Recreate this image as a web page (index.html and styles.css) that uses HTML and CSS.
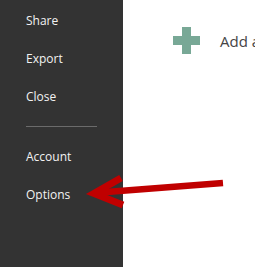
FILE: index.html
```html
<!DOCTYPE html>
<html>
<head>
<meta charset="utf-8">
<link rel="stylesheet" href="styles.css">
</head>
<body>
<div class="app">
  <nav class="sidebar">
    <div class="item">Share</div>
    <div class="item">Export</div>
    <div class="item">Close</div>
    <div class="sep"></div>
    <div class="item">Account</div>
    <div class="item">Options</div>
  </nav>
  <main class="main">
    <div class="add-row">
      <svg class="plus" width="27" height="27" viewBox="0 0 27 27">
        <rect x="9" y="0" width="9" height="27" fill="#78a896"/>
        <rect x="0" y="9" width="27" height="9" fill="#78a896"/>
      </svg>
      <span class="add-text">Add a Place</span>
    </div>
  </main>
  <svg class="arrow" width="255" height="267" viewBox="0 0 255 267">
    <line x1="100" y1="192.5" x2="223" y2="183" stroke="#c00000" stroke-width="6.5"/>
    <polyline points="121,178 94,193.5 123,205" fill="none" stroke="#c00000" stroke-width="7" stroke-linejoin="miter" stroke-miterlimit="10"/>
  </svg>
</div>
</body>
</html>
```
FILE: styles.css
```css
html, body {
  margin: 0;
  padding: 0;
  width: 255px;
  height: 267px;
  overflow: hidden;
  background: #ffffff;
}
.app {
  position: relative;
  display: flex;
  width: 255px;
  height: 267px;
}
.sidebar {
  width: 123px;
  flex: 0 0 123px;
  background: #333333;
  display: flex;
  flex-direction: column;
  padding-top: 2px;
  box-sizing: border-box;
}
.item {
  font-family: "Open Sans", "Noto Sans", sans-serif;
  font-size: 12px;
  line-height: 38px;
  color: #f2f2f2;
  padding-left: 26px;
  white-space: nowrap;
}
.sep {
  height: 1px;
  background: #6b6b6b;
  margin: 10px 26px 11px 26px;
  width: 71px;
}
.main {
  flex: 1;
  overflow: hidden;
  padding-top: 27px;
  padding-left: 50px;
}
.add-row {
  display: flex;
  align-items: center;
  gap: 20px;
  white-space: nowrap;
}
.plus {
  flex: 0 0 27px;
  display: block;
}
.add-text {
  font-family: "Open Sans", "Noto Sans", sans-serif;
  font-size: 15px;
  color: #444444;
}
.arrow {
  position: absolute;
  left: 0;
  top: 0;
  pointer-events: none;
}
```
